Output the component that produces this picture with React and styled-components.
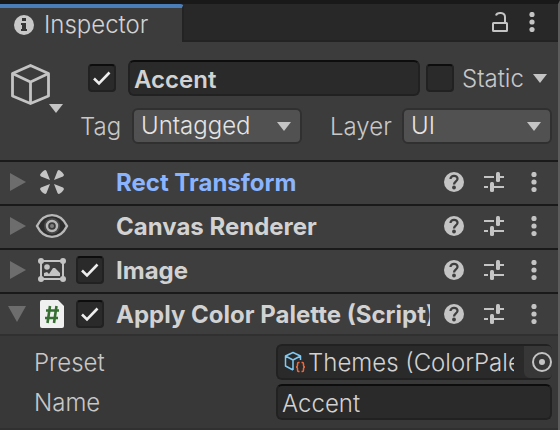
import React, { useId, useState } from "react";
import styled, { createGlobalStyle } from "styled-components";

const GlobalStyle = createGlobalStyle`
  *, *::before, *::after { box-sizing: border-box; }
  body {
    margin: 0;
    background: #383838;
    color: #c8c8c8;
    font: 350 24px/32px Inter, "Liberation Sans", sans-serif;
  }
  button, input, select { font: inherit; color: inherit; margin: 0; }
  svg { display: block; flex: none; }
`;

const Panel = styled.main`
  border-top: 4px solid #191919;
  border-right: 2px solid #5c5c5c;
  background: #383838;
  overflow: hidden;
`;

const TabBar = styled.header`
  display: flex;
  align-items: stretch;
  height: 38px;
  background: #282828;
  box-shadow: inset 0 -2px #232323;
`;

const Tab = styled.button`
  display: flex;
  align-items: center;
  gap: 10px;
  padding: 0 34px 0 14px;
  border: 0;
  border-top: 4px solid #4a7ebb;
  border-right: 2px solid #232323;
  border-top-right-radius: 4px;
  background: #3c3c3c;
  color: #d2d2d2;
`;

const TabActions = styled.div`
  display: flex;
  align-items: center;
  gap: 12px;
  margin-left: auto;
  padding: 0 16px 2px 0;
`;

const IconButton = styled.button`
  display: grid;
  place-items: center;
  width: ${(p) => p.$width || 20}px;
  height: 28px;
  flex: none;
  padding: 0;
  border: 0;
  background: none;
`;

const ObjectHeader = styled.section`
  display: flex;
  padding: 18px 6px 16px 10px;
  background: #3c3c3c;
`;

const ObjectIconButton = styled.button`
  align-self: flex-start;
  flex: none;
  width: 54px;
  margin: 4px 14px 0 0;
  padding: 0;
  border: 0;
  background: none;
  color: #c4c4c4;
`;

const ObjectSettings = styled.div`
  display: flex;
  flex: 1;
  flex-direction: column;
  gap: 12px;
  min-width: 0;
`;

const NameRow = styled.div`
  display: flex;
  align-items: center;
  padding-left: 10px;
`;

const TextInput = styled.input`
  flex: 1;
  width: 100%;
  min-width: 0;
  height: 36px;
  padding: 2px 4px 0;
  border: 2px solid #212121;
  border-top-color: #0d0d0d;
  border-radius: 6px;
  outline: 0;
  background: #2a2a2a;
  color: #d2d2d2;
  font-weight: ${(p) => (p.$strong ? 600 : 350)};
`;

const NameInput = styled(TextInput)`
  margin: 0 6px 0 12px;
`;

const CheckFrame = styled.span`
  display: grid;
  flex: none;
  width: 28px;
  height: 28px;
  > * { grid-area: 1 / 1; }
  svg { pointer-events: none; }
`;

const CheckInput = styled.input`
  appearance: none;
  width: 28px;
  height: 28px;
  border: 2px solid #212121;
  border-top-color: #0d0d0d;
  border-radius: 4px;
  background: #2a2a2a;
`;

const FieldLabel = styled.label`
  flex: none;
  width: ${(p) => (p.$width ? `${p.$width}px` : "auto")};
  padding: 2px 0 0 ${(p) => p.$inset || 0}px;
`;

const SelectRow = styled.div`
  display: flex;
  align-items: center;
`;

const SelectFrame = styled.span`
  display: grid;
  align-items: center;
  flex: 1 1 ${(p) => p.$basis}px;
  min-width: 0;
  margin-right: ${(p) => p.$after || 0}px;
  > * { grid-area: 1 / 1; }
  svg { justify-self: end; margin-right: 11px; pointer-events: none; }
`;

const Select = styled.select`
  appearance: none;
  width: 100%;
  height: 36px;
  padding: 0 32px 0 7px;
  border: 2px solid #303030;
  border-radius: 6px;
  background: #515151;
  color: #e4e4e4;
`;

const ComponentRow = styled.section`
  display: flex;
  align-items: center;
  height: ${(p) => (p.$open ? 42 : 44)}px;
  padding: 0 14px ${(p) => (p.$open ? 0 : 2)}px 0;
  border-top: 2px solid #1a1a1a;
  background: #3e3e3e;
`;

const ComponentIcon = styled.span`
  display: grid;
  place-items: center;
  flex: none;
  width: 36px;
  height: 32px;
`;

const EnableSlot = styled.span`
  flex: none;
  width: 28px;
  margin: 0 12px 0 6px;
`;

const ComponentTitle = styled.h2`
  flex: 1;
  min-width: 0;
  margin: 0 14px 0 0;
  padding-top: 2px;
  overflow: hidden;
  white-space: nowrap;
  font-size: 24px;
  font-weight: 700;
  color: ${(p) => (p.$highlight ? "#8ab4ff" : "#d2d2d2")};
`;

const RowActions = styled.div`
  display: flex;
  align-items: center;
  gap: 20px;
`;

const Properties = styled.div`
  display: flex;
  flex-direction: column;
  gap: 4px;
  padding: 8px 6px 8px 34px;
  border-top: 2px solid #303030;
  border-bottom: 2px solid #303030;
`;

const Property = styled.div`
  display: grid;
  grid-template-columns: minmax(0, 242fr) minmax(0, 276fr);
  align-items: center;
`;

const ObjectField = styled.div`
  display: flex;
  align-items: center;
  height: 36px;
  padding-left: 6px;
  border: 2px solid #212121;
  border-right: 0;
  border-radius: 6px;
  background: #2a2a2a;
`;

const ObjectValue = styled.input`
  flex: 1;
  min-width: 0;
  width: 0;
  height: 32px;
  margin: 0 10px 0 2px;
  padding: 2px 0 0;
  border: 0;
  outline: 0;
  background: none;
  color: #d2d2d2;
`;

const PickerButton = styled(IconButton)`
  height: 32px;
  padding-left: 8px;
  border-radius: 0 4px 4px 6px;
  background: #373737;
`;

const InfoIcon = () => (
  <svg width="20" height="20" viewBox="0 0 20 20" aria-hidden="true">
    <circle cx="10" cy="10" r="10" fill="#c8c8c8" />
    <path d="M8 3h4v3H8zM7 8h5v6h1v2H7v-2h1v-4H7z" fill="#363636" />
  </svg>
);

const LockIcon = () => (
  <svg width="18" height="22" viewBox="0 0 18 22" fill="none" stroke="#c4c4c4" strokeWidth="2" aria-hidden="true">
    <rect x="2" y="12" width="14" height="8" rx="0.5" />
    <path d="M5 4.5c1-3.5 9-3.5 9 1.5v6" />
  </svg>
);

const DotsIcon = () => (
  <svg width="6" height="20" viewBox="0 0 6 20" fill="#c4c4c4" aria-hidden="true">
    <circle cx="3" cy="2.5" r="2.6" />
    <circle cx="3" cy="10" r="2.6" />
    <circle cx="3" cy="17.5" r="2.6" />
  </svg>
);

const CubeIcon = () => (
  <svg width="54" height="50" viewBox="0 0 54 50" aria-hidden="true">
    <g fill="none" stroke="currentColor" strokeWidth="2.8" strokeLinejoin="round">
      <path d="M20.500 1.500 38.500 9.500V32L20.500 39.500 2.500 32V9.500Z" />
      <path d="M2.500 9.500 20.500 18 38.500 9.500M20.500 18v21.500" />
    </g>
    <path d="M39 40h14l-7 9z" fill="currentColor" />
  </svg>
);

const DownArrow = () => (
  <svg width="14" height="9" viewBox="0 0 14 9" fill="#c4c4c4" aria-hidden="true">
    <path d="M0 0h14L7 9z" />
  </svg>
);

const CheckMark = () => (
  <svg width="28" height="28" viewBox="0 0 28 28" fill="none" stroke="#eeeeee" strokeWidth="2.6" aria-hidden="true">
    <path d="M6 14.500 11 19.500 21.500 8.500" />
  </svg>
);

const FoldIcon = ({ open }) => (
  <svg width="20" height="20" viewBox="0 0 20 20" fill="#6d6d6d" aria-hidden="true">
    <path d={open ? "M1 2h18l-9 16z" : "M3 1v18l16-9z"} />
  </svg>
);

const RectIcon = () => (
  <svg width="24" height="24" viewBox="0 0 24 24" fill="#c4c4c4" aria-hidden="true">
    {[0, 90, 180, 270].map((a) => (
      <path
        key={a}
        transform={`rotate(${a} 12 12)`}
        d="M10 10 1 6.500Q-0.500 5.500 0.500 4 2 1.500 4 0.500 5.500-0.500 6.500 1Z"
      />
    ))}
  </svg>
);

const EyeIcon = () => (
  <svg width="34" height="26" viewBox="0 0 34 26" fill="none" aria-hidden="true">
    <path d="M2 13C9-1.500 25-1.500 32 13C25 27.500 9 27.500 2 13Z" fill="#2d2d2d" stroke="#b8b8b8" strokeWidth="2.4" />
    <circle cx="17" cy="13" r="8" fill="#484848" />
    <circle cx="17" cy="13" r="5" fill="#3a3a3a" stroke="#b8b8b8" strokeWidth="2.400" />
    <circle cx="17" cy="13" r="2" fill="#808080" />
  </svg>
);

const ImageIcon = () => (
  <svg width="28" height="24" viewBox="0 0 28 24" fill="#c4c4c4" aria-hidden="true">
    <rect x="3" y="3" width="22" height="18" fill="none" stroke="#c4c4c4" strokeWidth="2" />
    <circle cx="3" cy="3" r="3" />
    <circle cx="25" cy="3" r="3" />
    <circle cx="3" cy="21" r="3" />
    <circle cx="25" cy="21" r="3" />
    <circle cx="9" cy="9" r="2.800" />
    <path d="M6 18v-3l3-1 2 2 4-6h2l5 5v3z" />
  </svg>
);

const ScriptIcon = () => (
  <svg width="24" height="28" viewBox="0 0 24 28" aria-hidden="true">
    <path d="M2 0h16l6 6v20q0 2-2 2H2q-2 0-2-2V2Q0 0 2 0Z" fill="#f0f0f0" />
    <path d="M10 6 7.500 23M16.500 6 14 23M6 10.500h13M5 18h13" fill="none" stroke="#376e32" strokeWidth="2.600" />
  </svg>
);

const HelpIcon = () => (
  <svg width="20" height="20" viewBox="0 0 20 20" aria-hidden="true">
    <circle cx="10" cy="10" r="10" fill="#c4c4c4" />
    <path d="M6.500 7c0-4.500 7.300-4 7 0-.2 2.300-3.500 2.500-3.500 5.500" fill="none" stroke="#3e3e3e" strokeWidth="2.300" />
    <circle cx="10" cy="15.500" r="1.900" fill="#3e3e3e" />
  </svg>
);

const SlidersIcon = () => (
  <svg width="20" height="20" viewBox="0 0 20 20" fill="#c4c4c4" aria-hidden="true">
    <path d="M0 4h10v2H0zM16 4h4v2h-4zM0 14h4v2H0zM10 14h10v2H10z" />
    <rect x="12" y="0" width="4" height="10" rx="1.500" />
    <rect x="6" y="10" width="4" height="10" rx="1.500" />
  </svg>
);

const AssetIcon = () => (
  <svg width="22" height="22" viewBox="0 0 22 22" fill="none" aria-hidden="true">
    <path d="M9 19 1.500 15V5L9 1.500 16.500 5v4M1.500 5 9 9 16.500 5M9 9v10" stroke="#7fc9f2" strokeWidth="1.500" strokeLinejoin="round" />
    <path d="M15.500 11.500h-1q-1 0-1 1.500v1.500q0 1.500-1.500 1.500 1.500 0 1.500 1.500V19q0 1.500 1 1.500h1M17.500 11.500h1q1 0 1 1.500v1.500q0 1.500 1.500 1.500-1.500 0-1.500 1.500V19q0 1.500-1 1.500h-1" stroke="#f0693d" strokeWidth="1.500" />
  </svg>
);

const TargetIcon = () => (
  <svg width="20" height="20" viewBox="0 0 20 20" aria-hidden="true">
    <circle cx="10" cy="10" r="9" fill="none" stroke="#c4c4c4" strokeWidth="2" />
    <circle cx="10" cy="10" r="3" fill="#c4c4c4" />
  </svg>
);

function Checkbox({ initial = false, ...rest }) {
  const [on, setOn] = useState(initial);
  return (
    <CheckFrame>
      <CheckInput type="checkbox" checked={on} onChange={() => setOn(!on)} {...rest} />
      {on && <CheckMark />}
    </CheckFrame>
  );
}

function SelectField({ label, labelWidth, inset, basis, after, options }) {
  const id = useId();
  return (
    <>
      <FieldLabel htmlFor={id} $width={labelWidth} $inset={inset}>{label}</FieldLabel>
      <SelectFrame $basis={basis} $after={after}>
        <Select id={id}>
          {options.map((o) => <option key={o}>{o}</option>)}
        </Select>
        <DownArrow />
      </SelectFrame>
    </>
  );
}

function ComponentHeader({ title, icon, open, toggle, highlight }) {
  return (
    <ComponentRow $open={open}>
      <IconButton $width={34} aria-label={`Fold ${title}`} aria-expanded={!!open}>
        <FoldIcon open={open} />
      </IconButton>
      <ComponentIcon>{icon}</ComponentIcon>
      <EnableSlot>{toggle && <Checkbox initial aria-label={`Enable ${title}`} />}</EnableSlot>
      <ComponentTitle $highlight={highlight}>{title}</ComponentTitle>
      <RowActions>
        <IconButton aria-label="Help"><HelpIcon /></IconButton>
        <IconButton aria-label="Presets"><SlidersIcon /></IconButton>
        <IconButton aria-label="More options"><DotsIcon /></IconButton>
      </RowActions>
    </ComponentRow>
  );
}

export default function App() {
  return (
    <>
      <GlobalStyle />
      <Panel>
        <TabBar>
          <Tab><InfoIcon />Inspector</Tab>
          <TabActions>
            <IconButton aria-label="Lock"><LockIcon /></IconButton>
            <IconButton aria-label="Inspector options"><DotsIcon /></IconButton>
          </TabActions>
        </TabBar>
        <ObjectHeader>
          <ObjectIconButton aria-label="Select icon"><CubeIcon /></ObjectIconButton>
          <ObjectSettings>
            <NameRow>
              <Checkbox initial aria-label="Active" />
              <NameInput $strong aria-label="Object name" defaultValue="Accent" />
              <Checkbox id="static" />
              <FieldLabel htmlFor="static" $width={74} $inset={8}>Static</FieldLabel>
              <IconButton $width={24} aria-label="Static flags"><DownArrow /></IconButton>
            </NameRow>
            <SelectRow>
              <SelectField label="Tag" labelWidth={54} inset={2} basis={170} after={28} options={["Untagged"]} />
              <SelectField label="Layer" labelWidth={72} basis={150} options={["UI"]} />
            </SelectRow>
          </ObjectSettings>
        </ObjectHeader>
        <ComponentHeader title="Rect Transform" icon={<RectIcon />} highlight />
        <ComponentHeader title="Canvas Renderer" icon={<EyeIcon />} />
        <ComponentHeader title="Image" icon={<ImageIcon />} toggle />
        <ComponentHeader title="Apply Color Palette (Script)" icon={<ScriptIcon />} toggle open />
        <Properties>
          <Property>
            <FieldLabel htmlFor="preset">Preset</FieldLabel>
            <ObjectField>
              <AssetIcon />
              <ObjectValue id="preset" readOnly value="Themes (ColorPalette)" />
              <PickerButton $width={28} aria-label="Pick preset"><TargetIcon /></PickerButton>
            </ObjectField>
          </Property>
          <Property>
            <FieldLabel htmlFor="name">Name</FieldLabel>
            <TextInput id="name" defaultValue="Accent" />
          </Property>
        </Properties>
      </Panel>
    </>
  );
}
